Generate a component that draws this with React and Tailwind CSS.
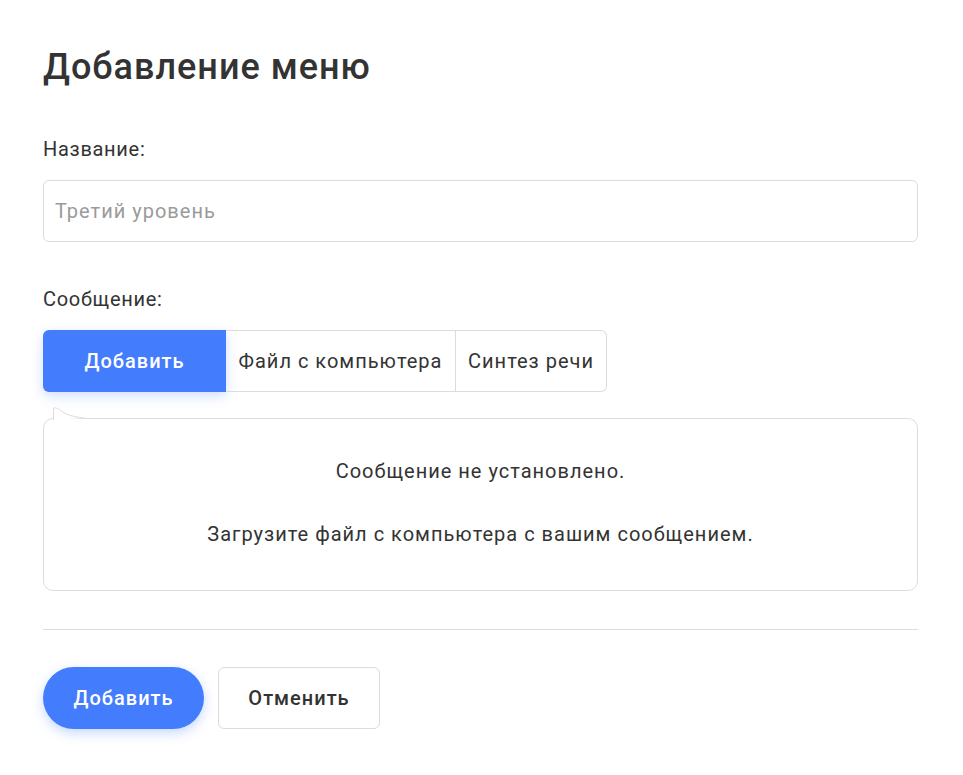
import React from "react";

export default function App() {
  return (
    <div className="min-h-screen bg-white text-[#333333] tracking-[1px]" style={{ fontFamily: "Roboto, 'Noto Sans', sans-serif" }}>
      <div className="w-[875px] ml-[43px] pt-[45px]">
        <h1 className="text-[36px] leading-[44px] font-medium text-[#333333] tracking-[1px]">Добавление меню</h1>

        <div className="mt-[48px] text-[20px] leading-[24px] tracking-[0.7px]">Название:</div>
        <input
          className="mt-[19px] block w-full h-[62px] rounded-[6px] border border-[#dcdcdc] px-[11px] text-[20px] tracking-[1px] outline-none placeholder:text-[#9a9a9a]"
          placeholder="Третий уровень"
        />

        <div className="mt-[45px] text-[20px] leading-[24px] tracking-[0.7px]">Сообщение:</div>
        <div className="mt-[19px] flex h-[62px]">
          <button className="w-[183px] h-[62px] rounded-l-[6px] bg-[#437cfd] text-white text-[20px] font-medium tracking-[1px] shadow-[0_4px_12px_rgba(67,124,253,0.25)]">
            Добавить
          </button>
          <button className="w-[230px] h-[62px] border-y border-r border-[#dcdcdc] text-[20px] tracking-[1px] text-[#333333]">Файл с компьютера</button>
          <button className="w-[151px] h-[62px] border-y border-r border-[#dcdcdc] rounded-r-[6px] text-[20px] tracking-[1px] text-[#333333]">Синтез речи</button>
        </div>

        <div className="relative mt-[26px]">
          <svg className="absolute left-[10px] -top-[11px]" width="32" height="13" viewBox="0 0 32 13">
            <path d="M0.5 13 L0.5 1 Q4 0 10 5 Q14 9 31 11" fill="white" stroke="#dcdcdc" strokeWidth="1" />
          </svg>
          <div className="h-[173px] rounded-[10px] border border-[#dcdcdc] flex flex-col items-center justify-center gap-[39px] text-[20px] leading-[24px] tracking-[1px] text-[#333333]">
            <div className="-mt-[4px]">Сообщение не установлено.</div>
            <div>Загрузите файл с компьютера с вашим сообщением.</div>
          </div>
        </div>

        <div className="mt-[38px] border-t border-[#dcdcdc]" />

        <div className="mt-[37px] flex gap-[14px]">
          <button className="w-[161px] h-[62px] rounded-full bg-[#437cfd] text-white text-[20px] font-medium tracking-[1px] shadow-[0_4px_12px_rgba(67,124,253,0.3)]">
            Добавить
          </button>
          <button className="w-[162px] h-[62px] rounded-[6px] border border-[#dcdcdc] bg-white text-[20px] font-medium tracking-[1px] text-[#333333]">
            Отменить
          </button>
        </div>
      </div>
    </div>
  );
}
